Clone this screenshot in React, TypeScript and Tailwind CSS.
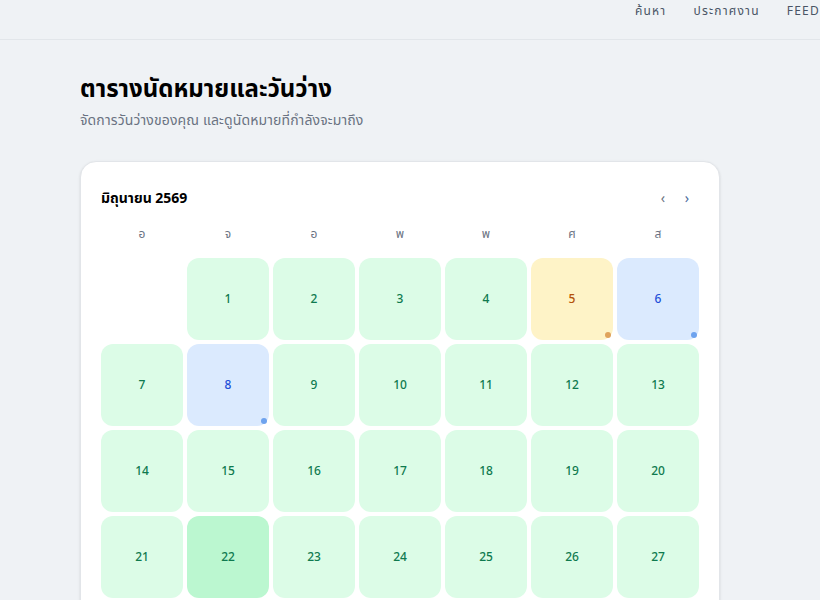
import { useMemo } from "react";

type DayKind = "free" | "busy" | "booked" | "today";

interface Day {
  date: number;
  kind: DayKind;
  dot?: "amber" | "blue";
}

const weekdays = ["อ", "จ", "อ", "พ", "พ", "ศ", "ส"];

const special: Record<number, { kind: DayKind; dot?: "amber" | "blue" }> = {
  5: { kind: "busy", dot: "amber" },
  6: { kind: "booked", dot: "blue" },
  8: { kind: "booked", dot: "blue" },
  22: { kind: "today" },
};

const cellStyles: Record<DayKind, string> = {
  free: "bg-[#dcfce7] text-[#0f7a4f]",
  today: "bg-[#bbf7d0] text-[#0f7a4f]",
  busy: "bg-[#fef3c7] text-[#b45309]",
  booked: "bg-[#dbeafe] text-[#1d4ed8]",
};

const dotStyles = {
  amber: "bg-[#e0a35c]",
  blue: "bg-[#6ea3ee]",
};

export default function App() {
  // มิถุนายน 2569 เริ่มวันจันทร์ -> เว้นช่องแรก 1 ช่อง
  const days = useMemo<Day[]>(() => {
    const list: Day[] = [];
    for (let d = 1; d <= 30; d++) {
      list.push({ date: d, kind: special[d]?.kind ?? "free", dot: special[d]?.dot });
    }
    return list;
  }, []);

  return (
    <div className="min-h-screen bg-[#eff2f5] text-gray-900 font-['Noto_Sans','Noto_Sans_Thai','Noto_Sans_Thai_UI',sans-serif]">
      {/* Header */}
      <header className="h-10 border-b border-[#e2e6ea] overflow-hidden">
        <nav className="flex items-start pl-[635px] pt-[2px] gap-[27px] text-[12px] text-gray-600 tracking-widest whitespace-nowrap">
          <a>ค้นหา</a>
          <a>ประกาศงาน</a>
          <a>FEED</a>
          <a>โปรไฟล์</a>
        </nav>
      </header>

      <main className="pl-20 pt-8">
        <h1 className="text-2xl leading-8 font-bold text-black">ตารางนัดหมายและวันว่าง</h1>
        <p className="mt-[6px] text-sm leading-5 text-gray-500 tracking-[0.01em]">
          จัดการวันว่างของคุณ และดูนัดหมายที่กำลังจะมาถึง
        </p>

        <section className="mt-[31px] w-[640px] bg-white border border-[#e2e5e9] rounded-2xl p-5 shadow-sm">
          <div className="flex items-center justify-between h-8 mb-3">
            <h2 className="text-sm font-bold text-black">มิถุนายน 2569</h2>
            <div className="flex">
              <button className="w-6 h-8 text-sm text-gray-500">‹</button>
              <button className="w-6 h-8 text-sm text-[#4b6a9b]">›</button>
            </div>
          </div>

          <div className="grid grid-cols-7 gap-1 mb-4">
            {weekdays.map((w, i) => (
              <div key={i} className="text-center text-xs leading-4 text-gray-500">
                {w}
              </div>
            ))}
          </div>

          <div className="grid grid-cols-7 gap-1">
            <div className="h-[82px]" />
            {days.map((d) => (
              <div
                key={d.date}
                className={`relative h-[82px] rounded-xl flex items-center justify-center text-xs font-medium ${cellStyles[d.kind]}`}
              >
                {d.date}
                {d.dot && (
                  <span
                    className={`absolute right-[2px] bottom-[2px] w-[6px] h-[6px] rounded-full ${dotStyles[d.dot]}`}
                  />
                )}
              </div>
            ))}
          </div>
        </section>
      </main>
    </div>
  );
}
